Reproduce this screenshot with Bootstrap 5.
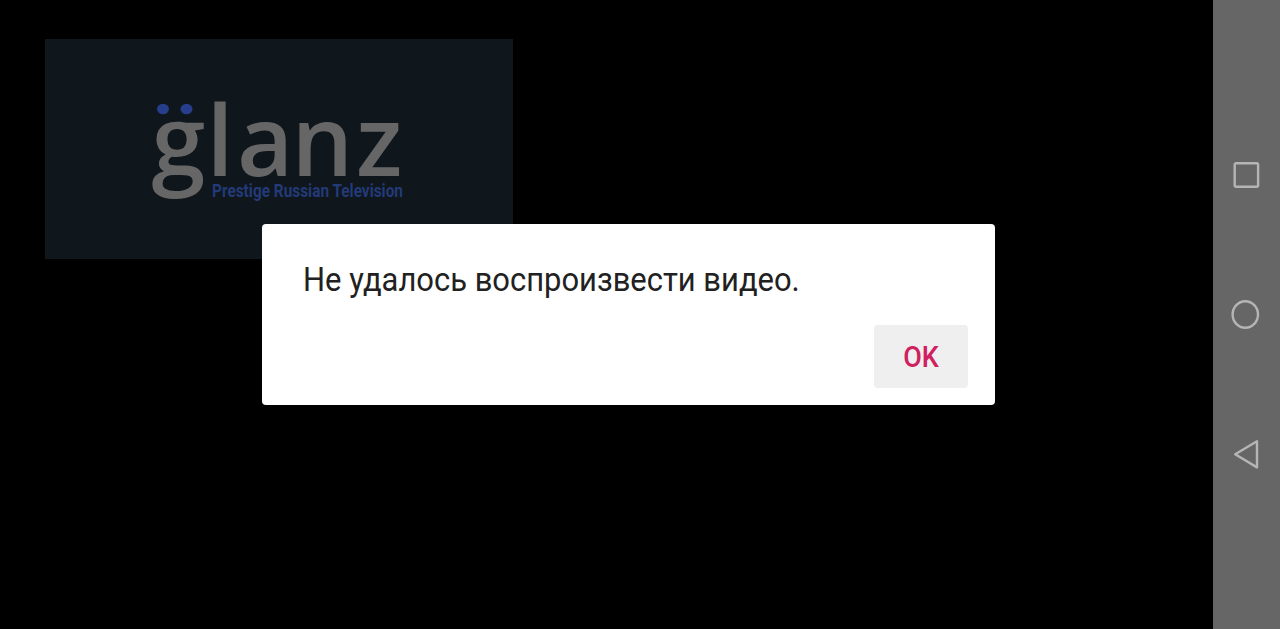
<!DOCTYPE html>
<html lang="ru">
<head>
    <meta charset="UTF-8">
    <meta name="viewport" content="width=device-width, initial-scale=1.0">
    <title>Glanz</title>
    <link href="https://cdn.jsdelivr.net/npm/bootstrap@5.3.0/dist/css/bootstrap.min.css" rel="stylesheet">
    <script src="https://cdn.jsdelivr.net/npm/bootstrap@5.3.0/dist/js/bootstrap.bundle.min.js"></script>
    <style>
        body {
            background: #000;
            font-family: Roboto, "Noto Sans", sans-serif;
        }
        .player {
            padding: 39px 0 0 45px;
        }
        .channel-logo {
            width: 468px;
            height: 220px;
            background: #0f161c;
        }
        .logo-name {
            font: 600 97px "Open Sans", sans-serif;
            fill: #666;
        }
        .logo-tagline {
            font: 700 19px Roboto, sans-serif;
            fill: #233a78;
        }
        .system-bar {
            width: 67px;
            background: #666;
            padding: 105px 0 104px;
        }
        .system-bar svg {
            fill: none;
            stroke: #b5b5b5;
            stroke-width: 2.4;
            stroke-linejoin: round;
        }
        /* message box over the player */
        .error-modal {
            left: 262px;
            top: 224px;
            width: 733px;
            height: 181px;
            border-radius: 4px;
            padding: 32px 27px 17px 41px;
        }
        .error-text {
            color: #212121;
            font-size: 32.5px;
            line-height: 48px;
            transform: scaleX(.952);
            transform-origin: left;
        }
        .btn-ok {
            --bs-btn-bg: #efefef;
            --bs-btn-color: #d02060;
            --bs-btn-hover-bg: #e4e4e4;
            --bs-btn-hover-color: #d02060;
            width: 94px;
            height: 63px;
            border-radius: 4px;
            font-size: 29px;
            font-weight: 500;
        }
        .btn-ok span {
            padding-top: 3px;
            transform: scaleX(.93);
        }
    </style>
</head>
<body class="vh-100 overflow-hidden d-flex">
    <main class="player flex-grow-1">
        <svg class="channel-logo d-block" viewBox="45 39 468 220">
            <ellipse cx="163" cy="109" rx="6" ry="5.3" fill="#263e8c"/>
            <ellipse cx="186.500" cy="109" rx="6" ry="5.3" fill="#263e8c"/>
            <text class="logo-name" y="176" x="151.500 206.500 237 291.500 356">glanz</text>
            <text class="logo-tagline" x="212" y="197" textLength="191" lengthAdjust="spacingAndGlyphs">Prestige Russian Television</text>
        </svg>
    </main>
    <nav class="system-bar d-flex flex-column justify-content-between align-items-center">
        <svg width="67" height="140" viewBox="1213 105 67 140">
            <rect x="1234.700" y="163.200" width="23.400" height="23.600" rx="1.500"/>
        </svg>
        <svg width="67" height="140" viewBox="1213 245 67 140">
            <ellipse cx="1245.300" cy="314.500" rx="12.700" ry="13.300"/>
        </svg>
        <svg width="67" height="140" viewBox="1213 385 67 140">
            <path d="M1235.200 454.300L1257 441.300V467.400Z"/>
        </svg>
    </nav>

    <div class="error-modal position-absolute bg-white d-flex flex-column justify-content-between" role="alertdialog">
        <div class="error-text text-nowrap">Не удалось воспроизвести видео.</div>
        <button type="button" class="btn btn-ok border-0 p-0 align-self-end"><span class="d-block">OK</span></button>
    </div>
</body>
</html>
